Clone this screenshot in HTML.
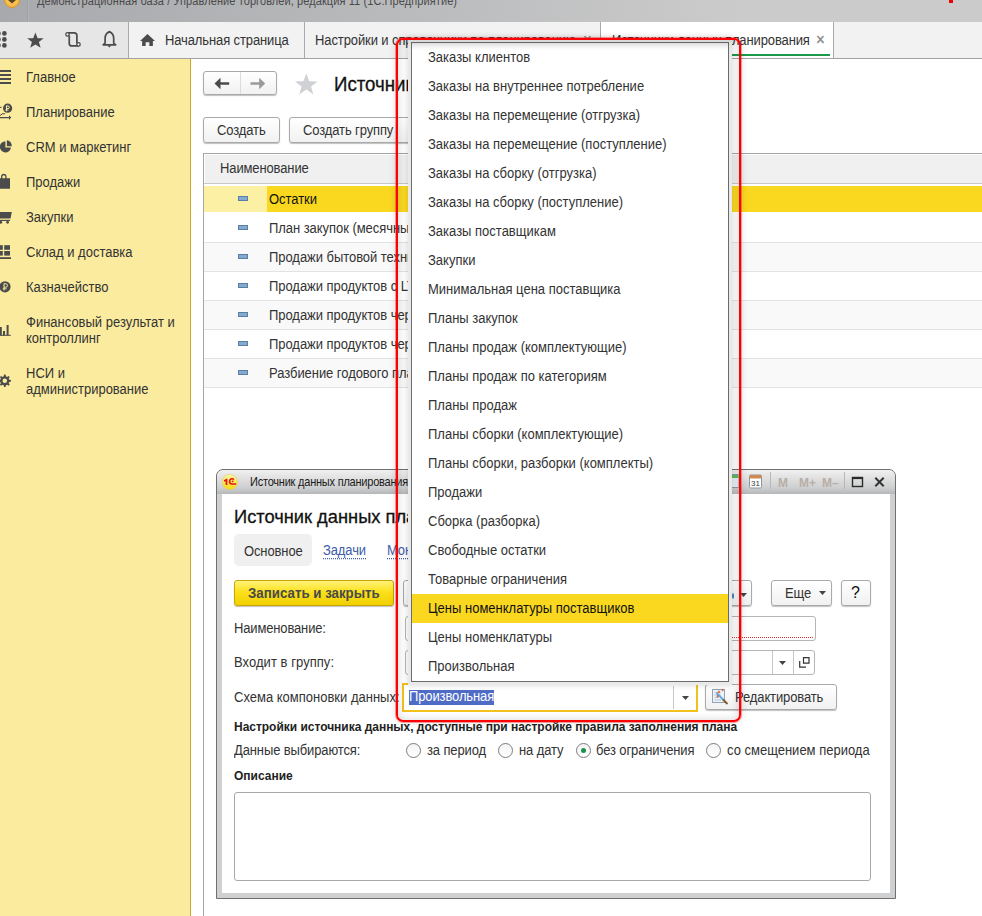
<!DOCTYPE html>
<html><head><meta charset="utf-8">
<style>
*{margin:0;padding:0;box-sizing:border-box}
html,body{width:982px;height:916px;overflow:hidden;background:#fff;font-family:"Liberation Sans",sans-serif;font-size:13px;color:#333}
.a{position:absolute}
.t{position:absolute;white-space:nowrap;line-height:16px;transform:scaleY(1.08);transform-origin:0 12.5px}
#title{left:0;top:0;width:982px;height:22px;background:linear-gradient(to right,#a8a9ac 0%,#b9babc 40%,#cbcbcb 75%,#cbcbcb 100%)}
#tool{left:0;top:22px;width:982px;height:37px;background:#f2f2f2;border-bottom:1px solid #a3a3a3}
#side{left:0;top:59px;width:191px;height:857px;background:#fbeb9f;border-right:1px solid #c9a92a}
.nav{left:26px;color:#333}
.tab{position:absolute;top:22px;height:36px;border-left:1px solid #a9a9a9}
.btn{position:absolute;border:1px solid #a9a9a9;border-radius:3px;background:linear-gradient(#fff,#f1f1f1);box-shadow:0 1px 1px rgba(0,0,0,.25)}
.row{position:absolute;left:204px;width:778px;height:29px;border-bottom:1px solid #e2e2e2}
.mi{position:absolute;left:238px;width:10px;height:4.5px;background:#85aad2;border:1px solid #5b7ea6}
.dd{position:absolute;left:428px;white-space:nowrap;line-height:16px;color:#333;letter-spacing:0px;transform:scaleY(1.08);transform-origin:0 12.5px}
</style></head><body>

<!-- title bar -->
<div id="title" class="a">
  <div class="a" style="left:4px;top:-8px;width:16px;height:16px;border-radius:50%;background:radial-gradient(circle at 50% 40%,#ffd77a,#f2a92b);border:1px solid #d99a2a"></div><svg class="a" style="left:8px;top:0" width="8" height="4"><path d="M0 0 L8 0 L4 3.6 Z" fill="#5a4418"/></svg>
  <div class="a" style="left:27px;top:0;width:1px;height:22px;background:#a0a1a3"></div><div class="a" style="left:28px;top:0;width:1px;height:22px;background:#b4b5b7"></div>
  <div class="t" style="left:37px;top:-7px;color:#4a4a4a;font-size:11px;letter-spacing:0.09px">Демонстрационная база / Управление торговлей, редакция 11  (1С:Предприятие)</div>
  <div class="a" style="left:949px;top:0;width:4px;height:3px;background:#e00"></div>
</div>

<!-- toolbar -->
<div id="tool" class="a">
  <div class="a" style="left:0;top:0;width:128px;height:36px;background:#e6e6e6"></div>
  <svg class="a" style="left:0;top:0" width="128" height="36" viewBox="0 0 128 36">
    <g fill="#4b4b4b">
      <circle cx="-1.6" cy="11.4" r="2.3"/><circle cx="4.4" cy="11.4" r="2.3"/>
      <circle cx="-1.6" cy="17.4" r="2.3"/><circle cx="4.4" cy="17.4" r="2.3"/>
      <circle cx="-1.6" cy="23.4" r="2.3"/><circle cx="4.4" cy="23.4" r="2.3"/>
      <path d="M35.4 10.4 L37.6 16.2 L43.6 16.3 L38.9 20.1 L40.6 25.8 L35.4 22.4 L30.2 25.8 L31.9 20.1 L27.2 16.3 L33.2 16.2 Z"/>
      <path d="M107.4 23.4 L111.4 23.4 L109.4 25.6 Z"/>
      <path d="M108 10 L109.4 8.6 L110.8 10 Z"/>
    </g>
    <path d="M109.4 9.9 C106.6 10.9 105.1 13.4 105.1 16.4 L105.1 21.2 L103.1 22.8 L115.7 22.8 L113.7 21.2 L113.7 16.4 C113.7 13.4 112.2 10.9 109.4 9.9 Z" fill="none" stroke="#4b4b4b" stroke-width="1.7" stroke-linejoin="round"/>
    <g fill="none" stroke="#4b4b4b" stroke-width="1.7">
      <path d="M67.5 10.9 L74.2 10.9 C75.8 10.9 76.9 12 76.9 13.6 L76.9 21.6"/>
      <path d="M69.25 13.4 L69.25 21.4 C69.25 23 70.4 23.9 72 23.9 L78.5 23.9"/>
    </g>
    <circle cx="67.5" cy="12.4" r="1.7" fill="#f0f0f0" stroke="#4b4b4b" stroke-width="1.3"/>
    <circle cx="78.5" cy="22.4" r="1.7" fill="#f0f0f0" stroke="#4b4b4b" stroke-width="1.3"/>
  </svg>
  <div class="a" style="left:128px;top:0;width:1px;height:36px;background:#a9a9a9"></div>
  <svg class="a" style="left:140px;top:12px" width="15" height="12" viewBox="0 0 17 13" preserveAspectRatio="none"><path fill="#4b4b4b" d="M8.5 0 L17 7.6 L14.6 7.6 L14.6 13 L10.6 13 L10.6 9 L6.4 9 L6.4 13 L2.4 13 L2.4 7.6 L0 7.6 Z"/></svg>
  <div class="t" style="left:165px;top:11px;letter-spacing:-0.12px">Начальная страница</div>
  <div class="a" style="left:304px;top:0;width:1px;height:36px;background:#a9a9a9"></div>
  <div class="t" style="left:315px;top:11px;letter-spacing:-0.1px">Настройки и справочники по планированию</div>
  <div class="t" style="left:583px;top:10px;font-size:15px;color:#777">&#215;</div>
  <div class="a" style="left:600px;top:0;width:1px;height:36px;background:#a9a9a9"></div>
  <div class="a" style="left:601px;top:0;width:232px;height:36px;background:#fff"></div>
  <div class="t" style="left:612px;top:11px;letter-spacing:-0.12px">Источники данных планирования</div>
  <div class="t" style="left:816px;top:10px;font-size:15px;color:#8a8a8a;-webkit-text-stroke:0.4px #8a8a8a">&#215;</div>
  <div class="a" style="left:601px;top:32px;width:229px;height:2px;background:#1b9b4a"></div>
  <div class="a" style="left:833px;top:0;width:1px;height:36px;background:#a9a9a9"></div>
</div>

<!-- sidebar -->
<div id="side" class="a">
  <svg class="a" style="left:0;top:0" width="20" height="340" viewBox="0 59 20 340">
    <g fill="#4b4b4b">
      <rect x="0" y="70" width="11" height="2"/><rect x="0" y="74" width="11" height="2"/><rect x="0" y="78" width="11" height="2"/><rect x="0" y="82" width="11" height="2"/>
      <circle cx="7.6" cy="108.2" r="4.6"/>
      <path d="M0 117 L9 117 L9 115.2 L11.2 117.6 L9 120 L9 118.2 L0 118.2 Z"/>
      <path d="M0 115.5 L3 113.4 L4 114.2 L5.2 113.2" fill="none" stroke="#4b4b4b" stroke-width="1"/>
      <rect x="0" y="106.8" width="1.6" height="1"/>
      <path d="M5.4 141.2 L5.4 147.6 L11 147.6 A5.6 5.6 0 1 1 5.4 141.2 Z"/>
      <path d="M6.8 140.2 L6.8 146.2 L11.8 146.2 A5.6 5.6 0 0 0 6.8 140.2 Z"/>
      <path d="M0 178.2 L1 178.2 L1 176.8 C1 175 2.2 173.8 3.8 173.8 C5.4 173.8 6.6 175 6.6 176.8 L6.6 178.2 L10 178.2 L10 188.8 L0 188.8 Z M2.3 178.2 L5.3 178.2 L5.3 177 C5.3 175.9 4.7 175.2 3.8 175.2 C2.9 175.2 2.3 175.9 2.3 177 Z" fill-rule="evenodd"/>
      <path d="M0 212 L11.8 212 L10.5 218.4 L0 218.4 Z"/>
      <rect x="0" y="219.8" width="10" height="1.2"/>
      <circle cx="0.8" cy="222.3" r="1.4"/><circle cx="7.6" cy="222.3" r="1.4"/>
      <rect x="0" y="245.2" width="2.8" height="4.6"/><rect x="4.2" y="245.2" width="5.8" height="4.6"/>
      <rect x="0" y="251" width="2.8" height="4.6"/><rect x="4.2" y="251" width="5.8" height="4.6"/>
      <rect x="0" y="257.2" width="11" height="1.8"/>
      <circle cx="5" cy="286.8" r="5.6"/>
      <rect x="0" y="327" width="1.8" height="8.4"/><rect x="3" y="331" width="2" height="4.4"/><rect x="6.6" y="325" width="2" height="10.4"/><rect x="0" y="334.8" width="10.8" height="1"/>
      <path d="M4 374.6 L5.6 374.6 L5.9 376.3 L7.2 376.9 L8.6 375.9 L9.7 377 L8.7 378.4 L9.3 379.7 L11 380 L11 381.6 L9.3 381.9 L8.7 383.2 L9.7 384.6 L8.6 385.7 L7.2 384.7 L5.9 385.3 L5.6 387 L4 387 L3.7 385.3 L2.4 384.7 L1 385.7 L-0.1 384.6 L0.9 383.2 L0.3 381.9 L-1.4 381.6 L-1.4 380 L0.3 379.7 L0.9 378.4 L-0.1 377 L1 375.9 L2.4 376.9 L3.7 376.3 Z"/>
    </g>
    <g fill="none" stroke="#fbeb9f" stroke-width="1">
      <path d="M6.5 105.5 L6.5 111.2 M6.5 106 L8 106 A1.3 1.3 0 0 1 8 108.6 L6.5 108.6 M5.4 110 L8.4 110"/>
      <path d="M4 283.5 L4 290.5 M4 283.8 L5.8 283.8 A1.7 1.7 0 0 1 5.8 287.2 L4 287.2 M2.8 288.8 L6.6 288.8"/>
    </g>
    <circle cx="4.8" cy="380.8" r="2.3" fill="#fbeb9f"/>
  </svg>
  <div class="t nav" style="top:11px">Главное</div>
  <div class="t nav" style="top:46px">Планирование</div>
  <div class="t nav" style="top:81px">CRM и маркетинг</div>
  <div class="t nav" style="top:116px">Продажи</div>
  <div class="t nav" style="top:151px">Закупки</div>
  <div class="t nav" style="top:186px">Склад и доставка</div>
  <div class="t nav" style="top:221px">Казначейство</div>
  <div class="t nav" style="top:257px;line-height:14.5px">Финансовый результат и<br>контроллинг</div>
  <div class="t nav" style="top:308px;line-height:14.5px">НСИ и<br>администрирование</div>
</div>


<!-- main content -->
<div class="btn" style="left:203px;top:71px;width:74px;height:24px"></div>
<div class="a" style="left:240px;top:72px;width:1px;height:22px;background:#dcdcdc"></div>
<svg class="a" style="left:214px;top:77px" width="16" height="13" viewBox="0 0 16 13"><path fill="#4b4b4b" d="M0.5 6.5 L6.5 0.8 L6.5 5.2 L15.2 5.2 L15.2 7.8 L6.5 7.8 L6.5 12.2 Z"/></svg>
<svg class="a" style="left:250px;top:77px" width="16" height="13" viewBox="0 0 16 13"><path fill="#9a9a9a" d="M15.2 6.5 L9.2 0.8 L9.2 5.2 L0.5 5.2 L0.5 7.8 L9.2 7.8 L9.2 12.2 Z"/></svg>
<svg class="a" style="left:294px;top:73px" width="25" height="22" viewBox="0 0 25 22"><path fill="#cfd1d4" d="M12.3 0.5 L15.2 8.2 L23.6 8.4 L17 13.4 L19.4 21.4 L12.3 16.6 L5.2 21.4 L7.6 13.4 L1 8.4 L9.4 8.2 Z"/></svg>
<div class="t" style="left:334px;top:74px;font-size:18.67px;line-height:22px;color:#111;-webkit-text-stroke:0.3px #111">Источники данных планирования</div>
<div class="btn" style="left:203px;top:117px;width:77px;height:26px"></div>
<div class="t" style="left:217px;top:123px;letter-spacing:-0.12px">Создать</div>
<div class="btn" style="left:289px;top:117px;width:150px;height:26px"></div>
<div class="t" style="left:303px;top:123px;letter-spacing:-0.12px">Создать группу</div>

<div class="a" style="left:203px;top:153px;width:779px;height:763px;border-left:1px solid #a5a5a5;border-top:1px solid #a5a5a5"></div>
<div class="a" style="left:205px;top:155px;width:777px;height:28px;background:#f0f0f0"></div>
<div class="a" style="left:204px;top:183px;width:778px;height:1px;background:#c8c8c8"></div>
<div class="t" style="left:220px;top:161px;letter-spacing:-0.12px">Наименование</div>
<div class="a" style="left:204px;top:186px;width:63px;height:26px;background:#fcf0a4"></div>
<div class="a" style="left:267px;top:186px;width:715px;height:26px;background:#fad820"></div>
<div class="a" style="left:204px;top:214px;width:778px;height:29px;background:#fff;border-bottom:1px solid #e3e3e3"></div>
<div class="a" style="left:204px;top:243px;width:778px;height:29px;background:#f9f9f9;border-bottom:1px solid #e3e3e3"></div>
<div class="a" style="left:204px;top:272px;width:778px;height:29px;background:#fff;border-bottom:1px solid #e3e3e3"></div>
<div class="a" style="left:204px;top:301px;width:778px;height:29px;background:#f9f9f9;border-bottom:1px solid #e3e3e3"></div>
<div class="a" style="left:204px;top:330px;width:778px;height:29px;background:#fff;border-bottom:1px solid #e3e3e3"></div>
<div class="a" style="left:204px;top:359px;width:778px;height:29px;background:#f9f9f9;border-bottom:1px solid #e3e3e3"></div>
<div class="mi" style="top:196px"></div>
<div class="mi" style="top:225px"></div>
<div class="mi" style="top:254px"></div>
<div class="mi" style="top:283px"></div>
<div class="mi" style="top:312px"></div>
<div class="mi" style="top:341px"></div>
<div class="mi" style="top:370px"></div>
<div class="t" style="left:269px;top:192px;color:#111;letter-spacing:-0.05px">Остатки</div>
<div class="t" style="left:269px;top:221px;letter-spacing:-0.05px">План закупок (месячный)</div>
<div class="t" style="left:269px;top:250px;letter-spacing:-0.05px">Продажи бытовой техники</div>
<div class="t" style="left:269px;top:279px;letter-spacing:-0.05px">Продажи продуктов с LTL</div>
<div class="t" style="left:269px;top:308px;letter-spacing:-0.05px">Продажи продуктов через</div>
<div class="t" style="left:269px;top:337px;letter-spacing:-0.05px">Продажи продуктов через</div>
<div class="t" style="left:269px;top:366px;letter-spacing:-0.05px">Разбиение годового плана</div>


<!-- dialog -->
<div class="a" style="left:216px;top:469px;width:680px;height:430px;border:1px solid #6f6f6f;border-radius:7px 7px 0 0;background:#cfd0d2"></div>
<div class="a" style="left:217px;top:470px;width:678px;height:24px;border-radius:6px 6px 0 0;background:linear-gradient(#f0f0f1 0%,#e0e0e1 35%,#cdcecf 75%,#b6b7b9 100%)"></div>
<div class="a" style="left:222px;top:494px;width:668px;height:399px;background:#fff"></div>
<svg class="a" style="left:222px;top:474px" width="16" height="16" viewBox="0 0 16 16">
  <defs><linearGradient id="g1c" x1="0" y1="0" x2="0" y2="1"><stop offset="0" stop-color="#fff7b0"/><stop offset="0.55" stop-color="#fbe94a"/><stop offset="1" stop-color="#f6d81a"/></linearGradient></defs>
  <circle cx="7.9" cy="8" r="7.6" fill="url(#g1c)" stroke="#e9cc55" stroke-width="0.6"/>
  <path d="M1.9 6.3 L4.3 4.7 L5.4 4.7 L5.4 10.9 L3.6 10.9 L3.6 7.2 L1.9 7.8 Z" fill="#e5141a"/>
  <path d="M12 5.6 C11.4 4.9 10.7 4.7 10 4.7 C8.6 4.7 7.6 5.8 7.6 7.3 C7.6 8.9 8.6 10 10 10 L14.2 10" fill="none" stroke="#e5141a" stroke-width="1.6"/>
  <circle cx="10.6" cy="7.3" r="0.9" fill="#e5141a"/>
</svg>
<div class="t" style="left:250px;top:474px;font-size:11px;color:#1a1a1a;letter-spacing:-0.22px">Источник данных планирования: Остатки</div>
<svg class="a" style="left:728px;top:472px" width="162" height="20" viewBox="0 0 162 20">
  <rect x="3" y="2.5" width="8" height="13" rx="1" fill="#e8eef3" stroke="#8a9aa6"/>
  <rect x="3.5" y="3" width="7" height="3" fill="#5cb85c"/>
  <rect x="21.5" y="3" width="12" height="13" rx="1.2" fill="#fff" stroke="#8b96a0"/>
  <rect x="21.5" y="3" width="12" height="3.6" rx="1" fill="#d08a52"/>
  <text x="27.5" y="14.4" font-family="Liberation Sans" font-size="8" text-anchor="middle" fill="#3a3a3a">31</text>
  <rect x="42" y="0" width="1" height="17" fill="#b8b8b8"/>
  <text x="50" y="14.5" font-family="Liberation Sans" font-weight="bold" font-size="12" fill="#b9aea6">M</text>
  <text x="71" y="14.5" font-family="Liberation Sans" font-weight="bold" font-size="12" fill="#b9aea6">M+</text>
  <text x="94" y="14.5" font-family="Liberation Sans" font-weight="bold" font-size="12" fill="#b9aea6">M&#8211;</text>
  <rect x="116" y="0" width="1" height="17" fill="#b8b8b8"/>
  <rect x="124.5" y="5.5" width="10" height="9" fill="none" stroke="#2b2b2b" stroke-width="1.4"/>
  <rect x="124.5" y="5.5" width="10" height="1.6" fill="#2b2b2b"/>
  <path d="M147.3 5.8 L155.7 14.2 M155.7 5.8 L147.3 14.2" stroke="#333" stroke-width="2"/>
</svg>

<div class="t" style="left:234px;top:506px;font-size:18.3px;line-height:22px;color:#111;-webkit-text-stroke:0.3px #111;transform:none">Источник данных планирования</div>
<div class="a" style="left:234px;top:534px;width:78px;height:32px;border-radius:5px;background:#f0f0f0"></div>
<div class="t" style="left:244px;top:544px;letter-spacing:-0.12px">Основное</div>
<div class="t" style="left:323px;top:544px;color:#3d5da8;letter-spacing:-0.12px;border-bottom:1px dotted #3d5da8;line-height:14px">Задачи</div>
<div class="t" style="left:387px;top:544px;color:#3d5da8;letter-spacing:-0.12px;border-bottom:1px dotted #3d5da8;line-height:14px">Мониторинг</div>

<div class="a" style="left:234px;top:580px;width:160px;height:26px;border:1px solid #c9a600;border-radius:3px;background:linear-gradient(#fff27a 0%,#fbe11d 45%,#f1d000 100%);box-shadow:0 1px 1px rgba(0,0,0,.25)"></div>
<div class="t" style="left:248px;top:586px;font-weight:bold;color:#4a4a4a;font-size:13.3px">Записать и закрыть</div>
<div class="btn" style="left:403px;top:580px;width:349px;height:26px"></div>
<svg class="a" style="left:740px;top:593px" width="7" height="4"><path d="M0 0 L7 0 L3.5 4 Z" fill="#444"/></svg><div class="a" style="left:731.5px;top:593px;width:2px;height:6px;border-radius:50%;background:#3a78b8"></div>
<div class="btn" style="left:771px;top:580px;width:61px;height:26px"></div>
<div class="t" style="left:785px;top:586px;letter-spacing:-0.12px">Еще</div>
<svg class="a" style="left:819px;top:591px" width="7" height="4"><path d="M0 0 L7 0 L3.5 4 Z" fill="#444"/></svg>
<div class="btn" style="left:841px;top:580px;width:30px;height:26px"></div>
<div class="t" style="left:851px;top:584px;font-size:16px;line-height:18px;color:#111">?</div>

<div class="t" style="left:234px;top:621px;letter-spacing:-0.15px">Наименование:</div>
<div class="a" style="left:405px;top:616px;width:411px;height:25px;border:1px solid #b5b5b5;border-radius:3px;background:#fff"></div>
<div class="a" style="left:409px;top:637px;width:404px;height:1px;border-bottom:1px dotted #e03030"></div>
<div class="t" style="left:234px;top:655px;letter-spacing:0.05px">Входит в группу:</div>
<div class="a" style="left:405px;top:650px;width:410px;height:25px;border:1px solid #b5b5b5;border-radius:3px;background:#fff"></div>
<div class="a" style="left:772px;top:651px;width:1px;height:23px;background:#c6c6c6"></div>
<div class="a" style="left:793px;top:651px;width:1px;height:23px;background:#c6c6c6"></div>
<svg class="a" style="left:779px;top:661px" width="7" height="4"><path d="M0 0 L7 0 L3.5 4 Z" fill="#444"/></svg>
<svg class="a" style="left:799px;top:657px" width="11" height="11" viewBox="0 0 11 11"><path d="M4.5 0.7 H10 V6.2 H4.5 Z" fill="none" stroke="#333" stroke-width="1.2"/><path d="M0.7 4 V10.2 H7" fill="none" stroke="#333" stroke-width="1.2"/></svg>
<div class="t" style="left:234px;top:690px;letter-spacing:0px">Схема компоновки данных:</div>
<div class="a" style="left:402px;top:683px;width:296px;height:29px;border:2px solid #f2c21b;background:#fff"></div>
<div class="a" style="left:409px;top:690px;width:85px;height:15px;background:#4e6bc6"></div>
<div class="t" style="left:409px;top:689px;color:#fff;letter-spacing:-0.12px">Произвольная</div>
<div class="a" style="left:673px;top:686px;width:1px;height:23px;background:#c6c6c6"></div>
<svg class="a" style="left:682px;top:696px" width="7" height="4"><path d="M0 0 L7 0 L3.5 4 Z" fill="#444"/></svg>
<div class="btn" style="left:705px;top:684px;width:132px;height:26px"></div>
<svg class="a" style="left:712px;top:688px" width="18" height="18" viewBox="0 0 18 18">
  <rect x="0.5" y="1.5" width="12" height="13" fill="#eef2f7" stroke="#8fa3bb"/>
  <path d="M2.5 4.5 H8 M2.5 7 H9 M2.5 9.5 H7 M2.5 12 H9" stroke="#a9b8c9" stroke-width="0.8"/>
  <path d="M4.5 5 L11.5 12" stroke="#5aa9e6" stroke-width="1.8"/>
  <path d="M11 11.5 L15.5 16" stroke="#7a5a22" stroke-width="1.8"/>
  <path d="M7 2 L7.6 3.4 L9 4 L7.6 4.6 L7 6 L6.4 4.6 L5 4 L6.4 3.4 Z M10.6 0.4 L11.1 1.5 L12.2 2 L11.1 2.5 L10.6 3.6 L10.1 2.5 L9 2 L10.1 1.5 Z M5.6 6.6 L6.1 7.7 L7.2 8.2 L6.1 8.7 L5.6 9.8 L5.1 8.7 L4 8.2 L5.1 7.7 Z" fill="#e8542a"/>
</svg>
<div class="t" style="left:735px;top:690px;letter-spacing:-0.12px">Редактировать</div>

<div class="t" style="left:234px;top:719px;font-weight:bold;font-size:12px;color:#222;letter-spacing:-0.02px">Настройки источника данных, доступные при настройке правила заполнения плана</div>
<div class="t" style="left:234px;top:743px;letter-spacing:-0.12px">Данные выбираются:</div>
<div class="a" style="left:406px;top:743px;width:15px;height:15px;border:1px solid #7c7c7c;border-radius:50%;background:linear-gradient(#f4f4f4,#fff)"></div>
<div class="t" style="left:427px;top:743px;letter-spacing:-0.12px">за период</div>
<div class="a" style="left:498px;top:743px;width:15px;height:15px;border:1px solid #7c7c7c;border-radius:50%;background:linear-gradient(#f4f4f4,#fff)"></div>
<div class="t" style="left:519px;top:743px;letter-spacing:-0.12px">на дату</div>
<div class="a" style="left:576px;top:743px;width:15px;height:15px;border:1px solid #7c7c7c;border-radius:50%;background:linear-gradient(#f4f4f4,#fff)"></div>
<div class="a" style="left:581px;top:748px;width:5px;height:5px;border-radius:50%;background:#1f8f4a"></div>
<div class="t" style="left:596px;top:743px;letter-spacing:-0.12px">без ограничения</div>
<div class="a" style="left:706px;top:743px;width:15px;height:15px;border:1px solid #7c7c7c;border-radius:50%;background:linear-gradient(#f4f4f4,#fff)"></div>
<div class="t" style="left:727px;top:743px">со смещением периода</div>
<div class="t" style="left:234px;top:768px;font-weight:bold;font-size:12px;color:#222">Описание</div>
<div class="a" style="left:234px;top:792px;width:637px;height:89px;border:1px solid #a9a9a9;border-radius:3px;background:#fff"></div>


<!-- dropdown -->
<div class="a" style="left:408px;top:39px;width:324px;height:646px;background:#e9e9e9;box-shadow:0 0 5px 1px rgba(0,0,0,.12)"></div>
<div class="a" style="left:411px;top:42px;width:318px;height:640px;border:1px solid #6b6b6b;background:linear-gradient(#e6e6e6 0,#fff 7px)"></div>
<div class="dd" style="top:50px">Заказы клиентов</div>
<div class="dd" style="top:79px">Заказы на внутреннее потребление</div>
<div class="dd" style="top:108px">Заказы на перемещение (отгрузка)</div>
<div class="dd" style="top:137px">Заказы на перемещение (поступление)</div>
<div class="dd" style="top:166px">Заказы на сборку (отгрузка)</div>
<div class="dd" style="top:195px">Заказы на сборку (поступление)</div>
<div class="dd" style="top:224px">Заказы поставщикам</div>
<div class="dd" style="top:253px">Закупки</div>
<div class="dd" style="top:282px">Минимальная цена поставщика</div>
<div class="dd" style="top:311px">Планы закупок</div>
<div class="dd" style="top:340px">Планы продаж (комплектующие)</div>
<div class="dd" style="top:369px">Планы продаж по категориям</div>
<div class="dd" style="top:398px">Планы продаж</div>
<div class="dd" style="top:427px">Планы сборки (комплектующие)</div>
<div class="dd" style="top:456px">Планы сборки, разборки (комплекты)</div>
<div class="dd" style="top:485px">Продажи</div>
<div class="dd" style="top:514px">Сборка (разборка)</div>
<div class="dd" style="top:543px">Свободные остатки</div>
<div class="dd" style="top:572px">Товарные ограничения</div>
<div class="a" style="left:412px;top:594px;width:316px;height:29px;background:#fad820"></div>
<div class="dd" style="top:601px;color:#111">Цены номенклатуры поставщиков</div>
<div class="dd" style="top:630px">Цены номенклатуры</div>
<div class="dd" style="top:659px">Произвольная</div>
<!-- annotation -->
<div class="a" style="left:396px;top:38px;width:345px;height:684px;outline:1px solid rgba(255,0,0,.35);outline-offset:-0.5px;border:2px solid #ff0000;border-radius:7px;box-shadow:0 0 7px rgba(0,0,0,.16),inset 0 0 8px rgba(0,0,0,.17)"></div>

</body></html>
